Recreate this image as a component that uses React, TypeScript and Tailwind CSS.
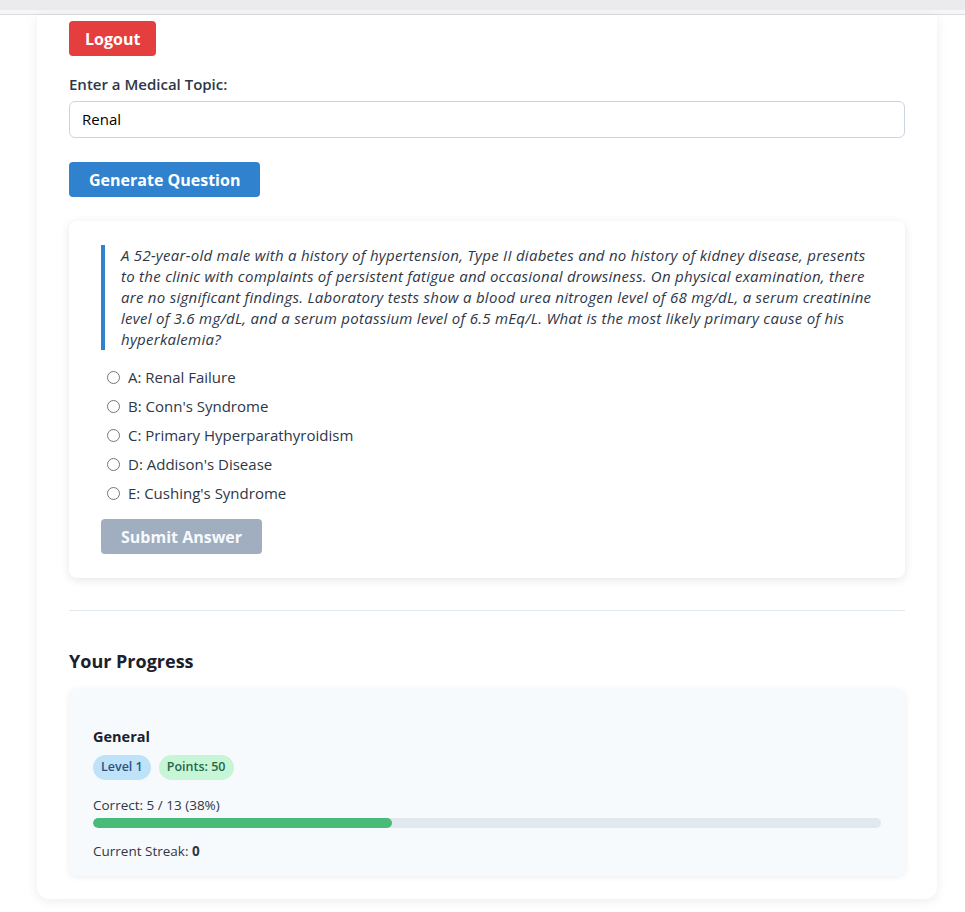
const options = [
    "A: Renal Failure",
    "B: Conn's Syndrome",
    "C: Primary Hyperparathyroidism",
    "D: Addison's Disease",
    "E: Cushing's Syndrome",
]

const App = () => {
    return (
        <div className="min-h-screen bg-white text-[#2d3748]" style={{ fontFamily: "'Open Sans', 'Noto Sans', sans-serif" }}>
            {/* top strip */}
            <div className="h-[10px] bg-[#ebebed]"></div>
            <div className="h-[5px] bg-[#f6f6f8] border-b border-[#dcdce0]"></div>

            <div className="px-[37px] pb-[12px]">
                <div className="w-[900px] bg-white rounded-b-xl shadow-[0_2px_12px_rgba(0,0,0,0.08)] px-8 pt-[6px] pb-[23px]">
                    <button className="h-[35px] px-4 bg-[#e53e3e] text-white font-bold text-[16px] rounded">
                        Logout
                    </button>

                    <label className="block mt-[18px] text-[15px] leading-[20px] font-semibold text-[#2d3748]">Enter a Medical Topic:</label>
                    <div className="mt-[7px] h-[37px] border border-[#cbd5e0] rounded-md flex items-center px-3 text-[15px] text-black">
                        Renal
                    </div>

                    <button className="mt-6 h-[35px] px-5 bg-[#3182ce] text-white font-bold text-[16px] rounded">
                        Generate Question
                    </button>

                    {/* question card */}
                    <div className="mt-6 bg-white rounded-lg shadow-[0_2px_10px_rgba(0,0,0,0.1)] px-8 pt-6 pb-6">
                        <div className="border-l-4 border-[#3182ce] pl-4 italic whitespace-nowrap text-[15px] leading-[21px] tracking-[0.27px] text-[#2d3748]">
                            A 52-year-old male with a history of hypertension, Type II diabetes and no history of kidney disease, presents
                            <br />
                            to the clinic with complaints of persistent fatigue and occasional drowsiness. On physical examination, there
                            <br />
                            are no significant findings. Laboratory tests show a blood urea nitrogen level of 68 mg/dL, a serum creatinine
                            <br />
                            level of 3.6 mg/dL, and a serum potassium level of 6.5 mEq/L. What is the most likely primary cause of his
                            <br />
                            hyperkalemia?
                        </div>

                        <div className="mt-[17px] flex flex-col gap-[8px]">
                            {options.map((o) => (
                                <label key={o} className="flex items-center h-[21px] text-[15px] text-[#2d3748]">
                                    <span className="ml-[6px] mr-[8px] w-[13px] h-[13px] rounded-full border border-[#767676] bg-white"></span>
                                    {o}
                                </label>
                            ))}
                        </div>

                        <button className="mt-[15px] h-[35px] px-5 bg-[#a0aec0] text-[#f7fafc] font-bold text-[16px] rounded">
                            Submit Answer
                        </button>
                    </div>

                    <hr className="mt-8 border-t border-[#e2e8f0]" />

                    <h2 className="mt-[38px] text-[18px] leading-[24px] font-bold text-[#1a202c]">Your Progress</h2>

                    {/* progress card */}
                    <div className="mt-[16px] bg-[#f7fafc] rounded-lg shadow-[0_1px_6px_rgba(0,0,0,0.08)] px-6 pt-[38px] pb-[16px]">
                        <div className="text-[14.5px] leading-[20px] font-bold text-[#1a202c]">General</div>
                        <div className="mt-[8px] flex gap-2">
                            <span className="h-[25px] px-2 flex items-center rounded-full bg-[#bee3f8] text-[#2c5282] text-[12.5px] font-semibold">Level 1</span>
                            <span className="h-[25px] px-2 flex items-center rounded-full bg-[#c6f6d5] text-[#276749] text-[12.5px] font-semibold">Points: 50</span>
                        </div>
                        <div className="mt-[16px] text-[13.5px] leading-[18px] text-[#2d3748]">Correct: 5 / 13 (38%)</div>
                        <div className="mt-[4px] h-[10px] bg-[#e2e8f0] rounded-full overflow-hidden">
                            <div className="h-full bg-[#48bb78] rounded-full" style={{ width: "38%" }}></div>
                        </div>
                        <div className="mt-[14px] text-[13.5px] leading-[18px] text-[#2d3748]">
                            Current Streak: <span className="font-bold">0</span>
                        </div>
                    </div>
                </div>
            </div>
        </div>
    )
}

export default App
